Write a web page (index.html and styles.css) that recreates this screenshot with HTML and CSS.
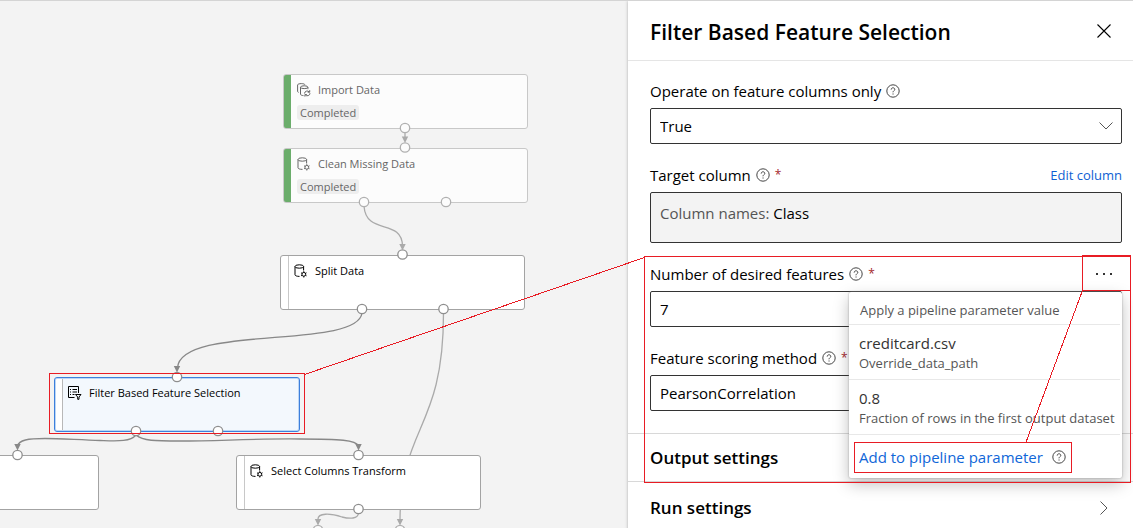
FILE: index.html
```html
<!DOCTYPE html>
<html lang="en">
<head>
<meta charset="utf-8">
<title>Filter Based Feature Selection</title>
<link rel="stylesheet" href="styles.css">
</head>
<body>
<svg class="sprite" aria-hidden="true">
  <defs>
    <symbol id="i-help" viewBox="0 0 14 14">
      <circle cx="7" cy="7" r="6.2" fill="none" stroke="currentColor" stroke-width="1"/>
      <path d="M5.2 5.6C5.2 4.4 6 3.8 7 3.8s1.8.6 1.8 1.6C8.800 6.700 7 6.700 7 8.300" fill="none" stroke="currentColor" stroke-width="1"/>
      <path d="M6.500 9.400h1.100v1.100h-1.100z" fill="currentColor"/>
    </symbol>
    <symbol id="i-data" viewBox="0 0 14 14">
      <g fill="none" stroke="currentColor" stroke-width="1">
        <ellipse cx="5.300" cy="2.500" rx="4.300" ry="1.700"/>
        <path d="M1 2.500v8.300c0 .9 1.900 1.600 4.500 1.600M9.600 2.500v4"/>
        <circle cx="9.800" cy="10.300" r="1.900"/>
        <path d="M9.800 7.200v1.200M9.800 12.200v1.300M7.100 8.800l1.100.6M11.400 11.200l1.100.6M7.100 11.800l1.100-.6M11.400 9.400l1.100-.6"/>
      </g>
    </symbol>
    <symbol id="i-import" viewBox="0 0 14 14">
      <g fill="none" stroke="currentColor" stroke-width="1">
        <path d="M1.600 9.400C1 9.200.6 8.900.6 8.500V1.900C.6 1.200 2.200.6 4.300.6s3.500.5 3.700 1.200"/>
        <ellipse cx="7.200" cy="4.200" rx="3.700" ry="1.400"/>
        <path d="M3.500 4.200v7c0 .8 1.300 1.300 3 1.400M10.900 4.200v2"/>
        <path d="M7.500 10.500a2.700 2.700 0 0 1 4.700-1.600M12.700 7.200v2h-2M13 10.200a2.700 2.700 0 0 1-4.700 1.700M7.900 13.600v-2h2"/>
      </g>
    </symbol>
    <symbol id="i-filter" viewBox="0 0 14 14">
      <g fill="none" stroke="currentColor" stroke-width="1">
        <path d="M6.500 11.500h-6V.5h10v6.500M2 3.500h1M4.500 3.500H9M2 6h1M4.500 6H9M2 8.500h1M4.500 8.500h2"/>
        <path d="M7.500 8.500h5.500l-2 2.500v2.300h-1.300V11z"/>
      </g>
    </symbol>
    <symbol id="i-chevron" viewBox="0 0 14 14">
      <path d="M.5 3.500 7 10l6.500-6.500" fill="none" stroke="currentColor" stroke-width="1"/>
    </symbol>
    <symbol id="i-close" viewBox="0 0 14 14">
      <path d="M.5.5l13 13M13.500.5l-13 13" fill="none" stroke="currentColor" stroke-width="1.100"/>
    </symbol>
  </defs>
</svg>

<div class="app">
  <main class="canvas">
    <svg class="edges" aria-hidden="true">
      <g class="edge edge-light">
        <path d="M405 132V139"/>
        <path d="M364 206C366 236 402 218 402.500 246"/>
        <path d="M443.500 313C443.500 430 401 425 400 519"/>
        <path d="M358.500 513C358 519 350 519 342 517C330 513 318 513 318 519"/>
      </g>
      <g class="edge edge-dark">
        <path d="M362 313C357 350 180 324 177.500 368"/>
        <path d="M136 435C130 442 117 441 100 440.500C80 440 60 438.500 45 438.500C28 438.500 19 440 17.500 446"/>
        <path d="M136 435C143 441 155 441 180 441C220 441 250 438.500 300 439C340 439 356 440 358.500 446"/>
      </g>
    </svg>

    <article class="node node-import done">
      <div class="node-title"><svg class="node-icon"><use href="#i-import"/></svg>Import Data</div>
      <span class="badge">Completed</span>
    </article>
    <article class="node node-clean done">
      <div class="node-title"><svg class="node-icon"><use href="#i-data"/></svg>Clean Missing Data</div>
      <span class="badge">Completed</span>
    </article>
    <article class="node node-split">
      <div class="node-title"><svg class="node-icon"><use href="#i-data"/></svg>Split Data</div>
    </article>
    <article class="node node-filter selected">
      <div class="node-title"><svg class="node-icon"><use href="#i-filter"/></svg>Filter Based Feature Selection</div>
    </article>
    <article class="node node-offscreen"></article>
    <article class="node node-select">
      <div class="node-title"><svg class="node-icon"><use href="#i-data"/></svg>Select Columns Transform</div>
    </article>

    <svg class="ports" aria-hidden="true">
      <g class="port port-light">
        <circle cx="405" cy="128" r="4.700"/><circle cx="405" cy="147.500" r="4.700"/>
        <circle cx="364" cy="202" r="4.700"/><circle cx="446" cy="202" r="4.700"/>
        <circle cx="318" cy="530" r="4.700"/><circle cx="400" cy="530" r="4.700"/>
      </g>
      <g class="port">
        <circle cx="402.500" cy="254.500" r="4.700"/><circle cx="362" cy="309" r="4.700"/><circle cx="443.500" cy="309" r="4.700"/>
        <circle cx="177" cy="377" r="4.700"/><circle cx="136" cy="431" r="4.700"/><circle cx="218" cy="431" r="4.700"/>
        <circle cx="17.500" cy="455" r="4.700"/><circle cx="358.500" cy="455" r="4.700"/><circle cx="358.500" cy="509" r="4.700"/>
      </g>
      <g class="arrowheads">
        <path class="light" d="M401.800 136.500h6.400L405 143zM399.300 244h6.400l-3.200 6.500zM396.800 519h6.400l-3.200 6.500zM314.800 519h6.400l-3.200 6.500z"/>
        <path class="dark" d="M173.800 366h6.400l-3.200 6.500zM14.300 444h6.400l-3.200 6.500zM355.300 444h6.400l-3.200 6.500z"/>
      </g>
    </svg>
  </main>

  <aside class="panel">
    <header class="panel-head">
      <h1>Filter Based Feature Selection</h1>
      <button class="icon-button" type="button" aria-label="Close"><svg class="icon"><use href="#i-close"/></svg></button>
    </header>

    <form class="fields">
      <div class="field">
        <div class="label-row">
          <label for="operate">Operate on feature columns only</label>
          <svg class="icon help"><use href="#i-help"/></svg>
        </div>
        <div class="select-box">
          <select class="control" id="operate"><option>True</option></select>
          <svg class="icon chevron"><use href="#i-chevron"/></svg>
        </div>
      </div>

      <div class="field">
        <div class="label-row">
          <span>Target column</span>
          <svg class="icon help"><use href="#i-help"/></svg>
          <span class="required">*</span>
          <a class="edit" href="#columns">Edit column</a>
        </div>
        <div class="column-box"><span class="muted">Column names:</span> Class</div>
      </div>

      <div class="field">
        <div class="label-row">
          <label for="count">Number of desired features</label>
          <svg class="icon help"><use href="#i-help"/></svg>
          <span class="required">*</span>
          <button class="more" type="button" aria-label="More options"><i></i><i></i><i></i></button>
        </div>
        <div class="menu-anchor">
          <input class="control" id="count" type="text" value="7">
          <div class="menu">
            <p class="menu-head">Apply a pipeline parameter value</p>
            <button class="menu-item" type="button"><b>creditcard.csv</b><span>Override_data_path</span></button>
            <button class="menu-item" type="button"><b>0.8</b><span>Fraction of rows in the first output dataset</span></button>
            <div class="menu-add">
              <button class="add" type="button">Add to pipeline parameter</button>
              <svg class="icon help"><use href="#i-help"/></svg>
            </div>
          </div>
        </div>
      </div>

      <div class="field">
        <div class="label-row">
          <label for="method">Feature scoring method</label>
          <svg class="icon help"><use href="#i-help"/></svg>
          <span class="required">*</span>
        </div>
        <div class="select-box">
          <select class="control" id="method"><option>PearsonCorrelation</option></select>
          <svg class="icon chevron"><use href="#i-chevron"/></svg>
        </div>
      </div>
    </form>

    <section class="section"><h2>Output settings</h2><svg class="icon next"><use href="#i-chevron"/></svg></section>
    <section class="section section-last"><h2>Run settings</h2><svg class="icon next"><use href="#i-chevron"/></svg></section>
  </aside>

  <svg class="callouts" aria-hidden="true">
    <path d="M49.500 373.500h255v60h-255zM644.500 256.500h486v226h-486zM1082.500 255.500h48v35h-48zM854.500 442.500h217v30h-217z"/>
    <path d="M304.500 374.500 644.500 257.500M1082.500 290.500 1025.500 443.500"/>
  </svg>
</div>
</body>
</html>
```
FILE: styles.css
```css
* { box-sizing: border-box; }

body {
  margin: 0;
  font-family: "Open Sans", "Noto Sans", sans-serif;
  font-size: 15px;
  line-height: 20px;
  color: #000;
  background: #f3f3f3;
}

h1, h2, p { margin: 0; }

button {
  font: inherit;
  color: inherit;
  background: none;
  border: 0;
  padding: 0;
  text-align: left;
}

.sprite { position: absolute; width: 0; height: 0; }
.icon { width: 14px; height: 14px; flex: none; display: block; }

.app {
  position: relative;
  display: grid;
  grid-template-columns: 628fr 505fr;
  height: 100vh;
  overflow: hidden;
  border-top: 1px solid #d4d4d4;
}

/* Pipeline canvas */
.canvas { position: relative; overflow: hidden; background: #f3f3f3; }

.edges, .ports, .callouts {
  position: absolute;
  left: 0;
  top: -1px;
  width: 100%;
  height: calc(100% + 1px);
  pointer-events: none;
}

.edge { fill: none; stroke-width: 1.3; }
.edge-light { stroke: #aaa; }
.edge-dark { stroke: #888; }
.port { fill: #fff; stroke: #8e8e8e; stroke-width: 1.3; }
.port-light { fill: #fcfcfc; stroke: #b0b0b0; }
.arrowheads .light { fill: #aaa; }
.arrowheads .dark { fill: #888; }

.node {
  position: absolute;
  width: 245px;
  height: 55px;
  padding: 7px 13px;
  border: 1px solid #a3a3a3;
  border-radius: 3px;
  background: linear-gradient(to right, #fff 7px, #c8c8c8 7px, #c8c8c8 8px, #fff 8px);
  font-size: 11px;
  line-height: 16px;
}

.node-import { left: 283px; top: 73px; }
.node-clean { left: 283px; top: 147px; }
.node-split { left: 280px; top: 254px; }
.node-filter { left: 54px; top: 376px; }
.node-offscreen { left: -146px; top: 454px; background: #fff; }
.node-select { left: 236px; top: 454px; }

.node.done {
  border-color: #c8c8c8;
  background: linear-gradient(to right, #6bad6b 7px, #fcfcfc 7px);
  color: #666;
}

.node.selected {
  width: 246px;
  border-color: #3c7fdc;
  box-shadow: inset 0 0 0 1px #bcd6f5;
  background: linear-gradient(to right, #fff 7px, #b8b8b8 7px, #b8b8b8 8px, #f3f8fd 8px);
}

.node-title { display: flex; align-items: center; gap: 7px; white-space: nowrap; }
.node-icon { width: 14px; height: 14px; flex: none; }

.badge {
  display: inline-block;
  margin-top: 7px;
  padding: 0 3px;
  line-height: 15px;
  border-radius: 3px;
  background: #eee;
}

/* Settings panel */
.panel { background: #fff; box-shadow: 0 0 3px #aaa; z-index: 1; }

.panel-head {
  display: flex;
  align-items: center;
  justify-content: space-between;
  height: 60px;
  padding: 0 22px;
  border-bottom: 1px solid #e5e5e5;
}

.panel-head h1 { padding-top: 2px; font-size: 21px; line-height: 28px; font-weight: 600; }

.fields {
  display: flex;
  flex-direction: column;
  gap: 21px;
  padding: 20px 11px 22px 22px;
}

.field { display: flex; flex-direction: column; gap: 7px; }
.label-row { display: flex; align-items: center; gap: 5px; height: 20px; }
.help { color: #444; }
.required { font-size: 12px; color: #a4262c; }
.edit { margin-left: auto; font-size: 13px; color: #0f5fd3; text-decoration: none; }

.control {
  display: block;
  width: 100%;
  height: 36px;
  padding: 0 9px;
  border: 1px solid #333;
  border-radius: 2px;
  background: #fff;
  font: inherit;
  color: inherit;
  appearance: none;
}

.select-box { display: grid; align-items: center; }
.select-box > * { grid-area: 1 / 1; }
.chevron { justify-self: end; margin-right: 9px; color: #555; pointer-events: none; }

.column-box {
  height: 51px;
  padding: 10px 9px;
  border: 1px solid #333;
  border-radius: 2px;
  background: #f3f3f3;
}
.muted { color: #555; }

.more { display: flex; gap: 5px; margin-left: auto; padding: 8px 10px; }
.more i { width: 2px; height: 2px; background: #333; }

.menu-anchor { position: relative; }

.menu {
  position: absolute;
  z-index: 2;
  top: 1px;
  right: 0;
  width: 273px;
  padding-right: 2px;
  background: #fff;
  border-radius: 2px;
  box-shadow: 0 0 2px #999, 0 6px 16px rgba(0, 0, 0, .25);
  white-space: nowrap;
}

.menu-head { padding: 8px 11px 4px; font-size: 13px; color: #555; border-bottom: 1px solid #e8e8e8; }

.menu-item {
  display: block;
  width: 100%;
  height: 55px;
  padding: 1px 10px 0;
  border-bottom: 1px solid #e8e8e8;
}
.menu-item b, .menu-item span { display: block; }
.menu-item b { font-weight: 400; color: #333; }
.menu-item span { font-size: 13px; color: #555; }

.menu-add { display: flex; align-items: center; gap: 9px; height: 43px; padding: 0 10px; }
.add { color: #0f66d8; }

.section {
  display: flex;
  align-items: center;
  justify-content: space-between;
  height: 48px;
  padding: 0 22px;
  border-top: 1px solid #d8d8d8;
}
.section-last { height: 52px; }
.section h2 { font-size: 17px; line-height: 24px; font-weight: 600; }
.next { transform: rotate(-90deg); color: #555; }

/* Callout frames drawn over the whole view */
.callouts {
  z-index: 3;
  fill: none;
  stroke: #e81c24;
  stroke-width: 1;
  shape-rendering: crispEdges;
}
```
